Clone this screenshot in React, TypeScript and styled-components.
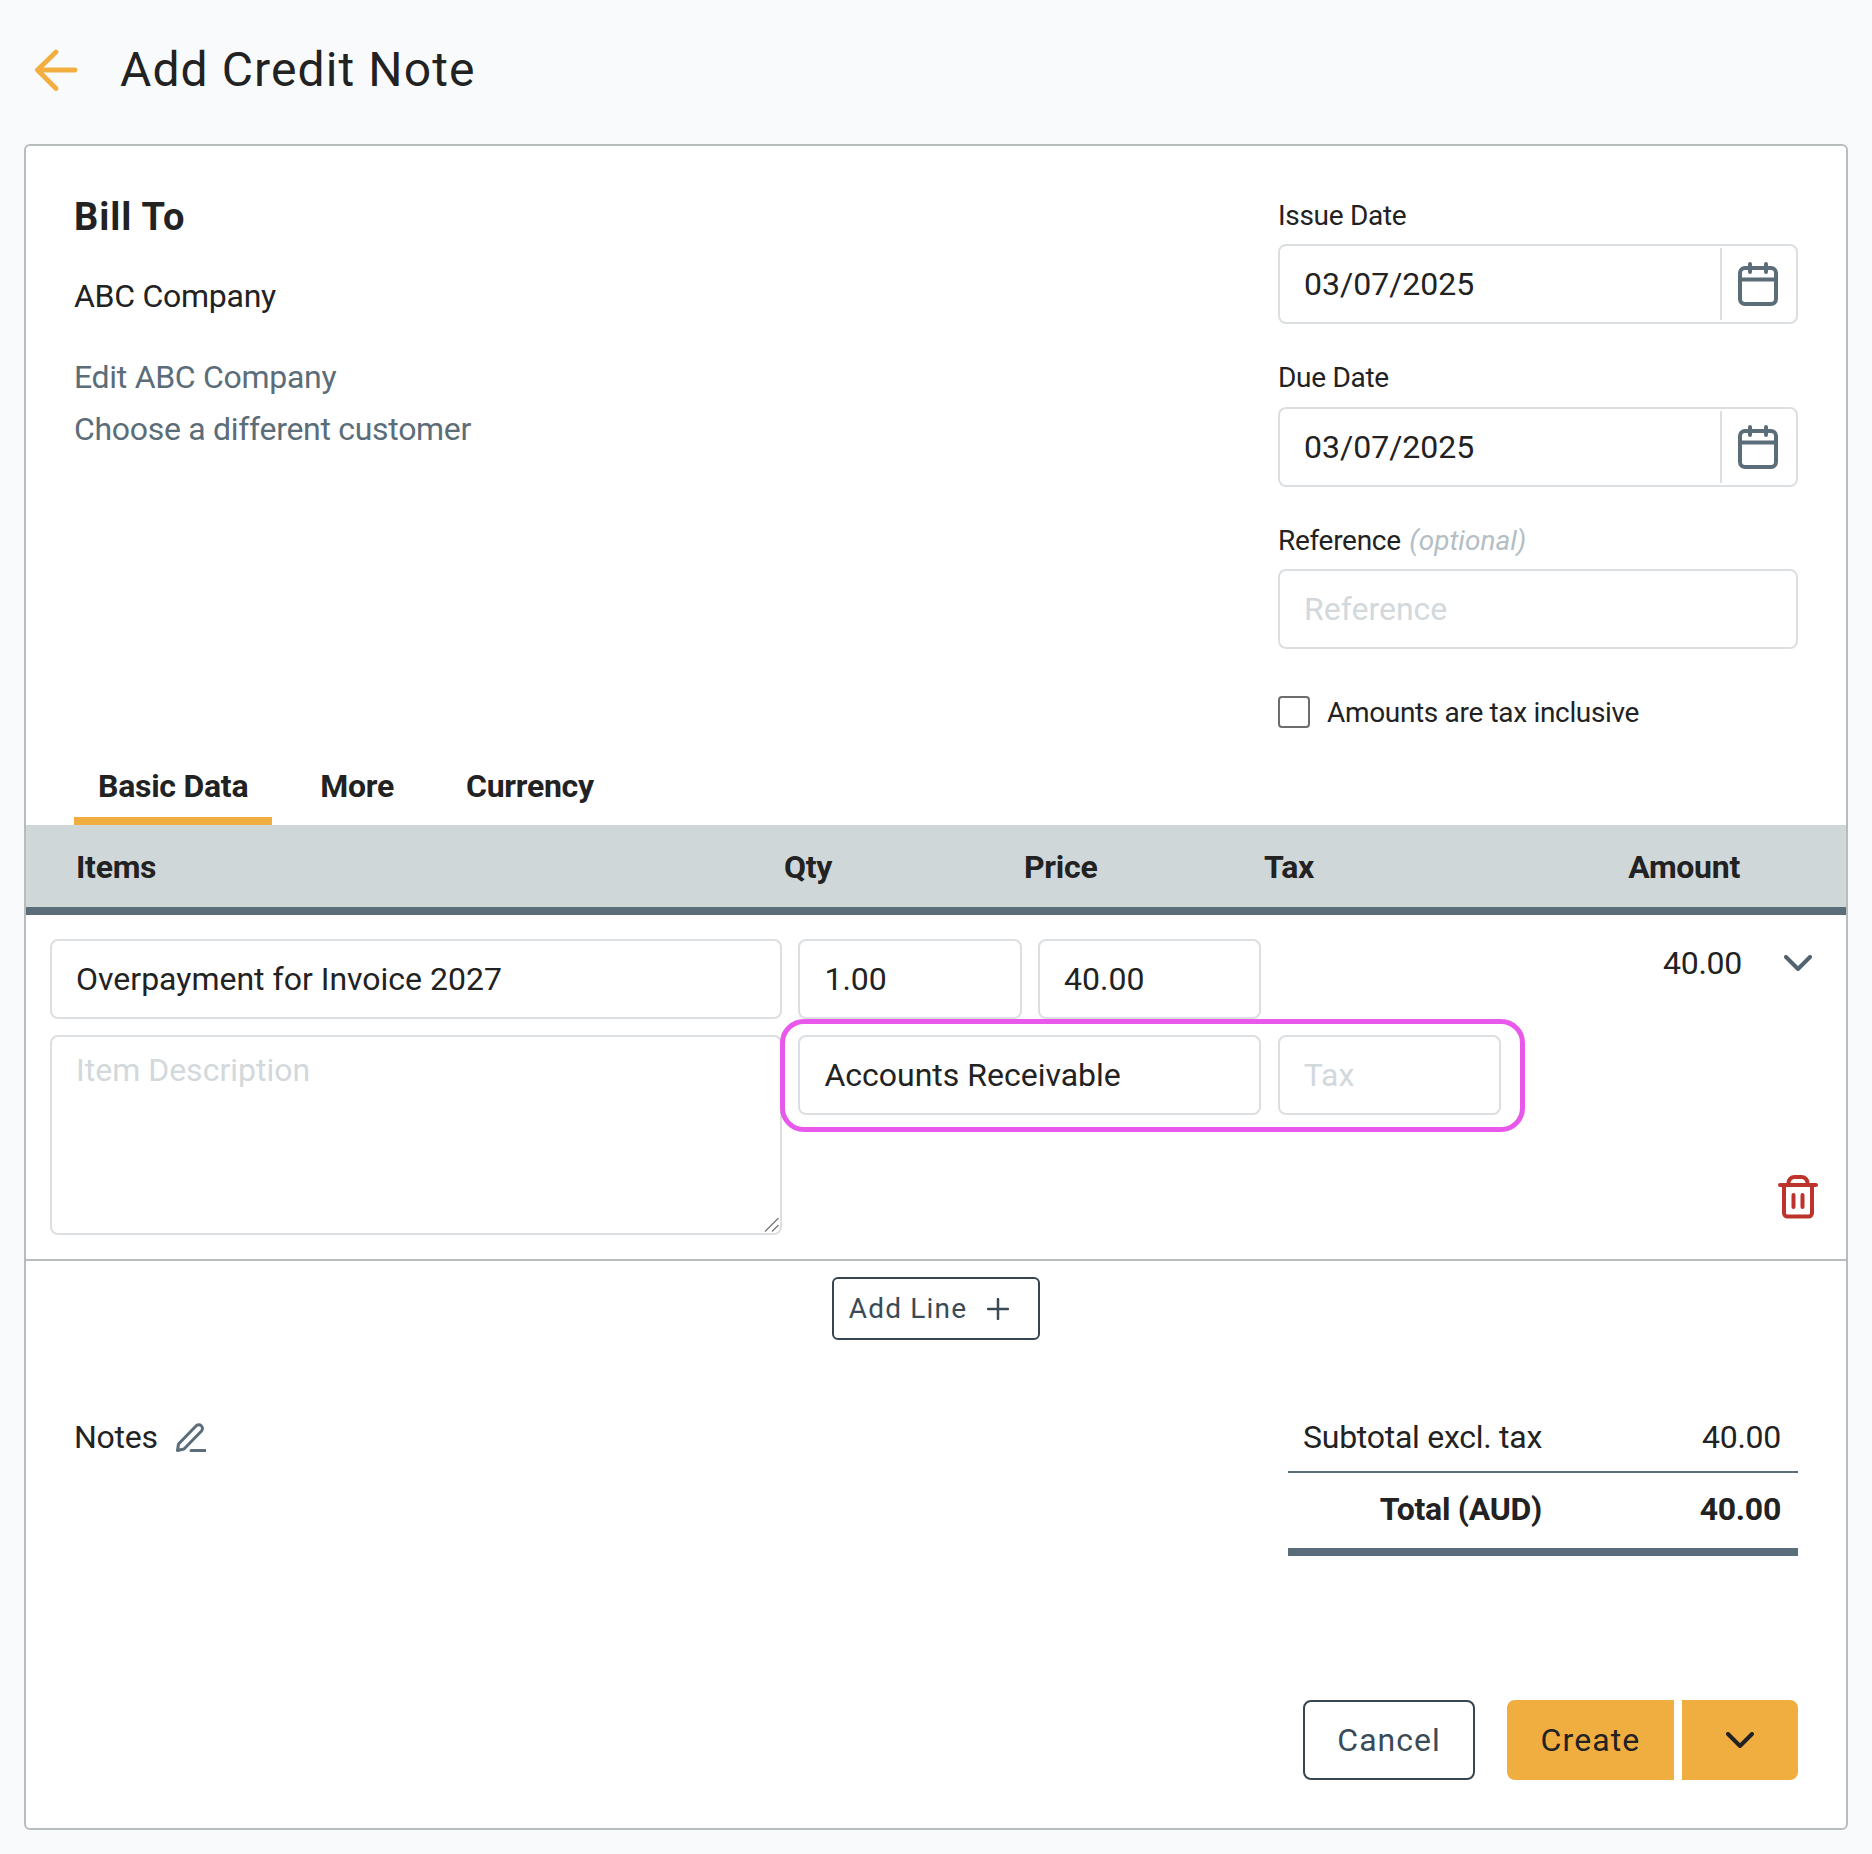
import React from "react";
import styled, { createGlobalStyle } from "styled-components";

const Global = createGlobalStyle`
  html, body { margin: 0; padding: 0; background: #f9fafc; }
  body { font-family: Roboto, "Liberation Sans", sans-serif; color: #222; letter-spacing: -0.27px; }
  * { box-sizing: border-box; }
`;

const Page = styled.div`
  width: 1872px;
  min-height: 1854px;
`;

const Header = styled.header`
  height: 144px;
  padding: 0 0 5px 34px;
  display: flex;
  align-items: center;
  gap: 42px;
`;

const Title = styled.h1`
  margin: 0;
  font-size: 48px;
  font-weight: 400;
  letter-spacing: 1.1px;
  color: #222;
`;

const Card = styled.main`
  margin-left: 24px;
  width: 1824px;
  height: 1686px;
  background: #fff;
  border: 2px solid #b9bcbd;
  border-radius: 6px;
  display: flex;
  flex-direction: column;
`;

const TopSection = styled.section`
  display: grid;
  grid-template-columns: 1fr 520px;
  padding: 50px 48px 29px 48px;
`;

const Customer = styled.div`
  display: flex;
  flex-direction: column;
  align-items: flex-start;
`;

const BillTitle = styled.h2`
  margin: 0 0 32px;
  height: 44px;
  line-height: 42px;
  font-size: 38px;
  font-weight: 700;
  letter-spacing: 0.95px;
`;

const CompanyName = styled.div`
  height: 48px;
  line-height: 48px;
  font-size: 32px;
  margin-bottom: 33px;
`;

const CustomerLink = styled.a`
  height: 52px;
  line-height: 48px;
  font-size: 32px;
  letter-spacing: -0.3px;
  color: #5b6d79;
`;

const Field = styled.div`
  margin-bottom: 34px;
`;

const Label = styled.label<{ $tight?: boolean }>`
  display: block;
  height: 40px;
  line-height: 40px;
  margin-bottom: ${(p) => (p.$tight ? "8px" : "9px")};
  font-size: 28px;
  letter-spacing: -0.3px;
`;

const Optional = styled.em`
  margin-left: 2px;
  letter-spacing: 0;
  color: #b3bec5;
`;

const TextInput = styled.input`
  display: block;
  width: 100%;
  height: 80px;
  padding: 0 24px;
  border: 2px solid #dcdfe1;
  border-radius: 8px;
  background: #fff;
  font-family: inherit;
  font-size: 32px;
  color: #222;
  outline: none;
  &::placeholder { color: #d2d8db; opacity: 1; }
`;

const DateBox = styled.div`
  display: flex;
  height: 80px;
  border: 2px solid #dcdfe1;
  border-radius: 8px;
`;

const DateInput = styled.input`
  flex: 1;
  min-width: 0;
  padding: 0 24px;
  border: 0;
  background: transparent;
  font-family: inherit;
  font-size: 32px;
  color: #222;
  outline: none;
`;

const CalendarButton = styled.div`
  width: 76px;
  margin: 2px 0;
  padding-right: 2px;
  border-left: 2px solid #dcdfe1;
  display: flex;
  align-items: center;
  justify-content: center;
`;

const CheckRow = styled.div`
  display: flex;
  align-items: center;
  gap: 17px;
  margin-top: 47px;
  height: 32px;
  font-size: 28px;
  letter-spacing: -0.33px;
`;

const CheckBox = styled.span`
  width: 32px;
  height: 32px;
  border: 2px solid #6d6d6d;
  border-radius: 4px;
`;

const Tabs = styled.nav`
  display: flex;
  gap: 24px;
  padding-left: 48px;
`;

const Tab = styled.div<{ $active?: boolean }>`
  height: 68px;
  padding: 0 24px;
  line-height: 58px;
  font-size: 32px;
  font-weight: 700;
  border-bottom: 8px solid ${(p) => (p.$active ? "#f0ae40" : "transparent")};
`;

const TableHead = styled.div`
  display: grid;
  grid-template-columns: 708px 240px 240px 1fr auto;
  align-items: center;
  height: 90px;
  padding: 1px 106px 0 50px;
  background: #d0d7d9;
  border-bottom: 8px solid #5b6d79;
  font-size: 32px;
  font-weight: 700;
`;

const Line = styled.div`
  display: grid;
  grid-template-columns: 732px 223.3px 223.3px 223.3px 1fr;
  grid-template-rows: 80px 80px 104px;
  column-gap: 16.4px;
  row-gap: 16px;
  padding: 24px 0 24px 24px;
  border-bottom: 2px solid #b9bcbd;
`;

const DescriptionBox = styled.div`
  grid-column: 1;
  grid-row: 2 / 4;
  position: relative;
`;

const Description = styled.textarea`
  display: block;
  width: 100%;
  height: 200px;
  padding: 12px 24px;
  line-height: 42px;
  border: 2px solid #dcdfe1;
  border-radius: 8px;
  font-family: inherit;
  font-size: 32px;
  outline: none;
  resize: none;
  &::placeholder { color: #d2d8db; opacity: 1; }
`;

const Grip = styled.svg`
  position: absolute;
  right: 3px;
  bottom: 3px;
`;

const Highlight = styled.div`
  grid-column: 2 / 5;
  grid-row: 2;
  position: relative;
  display: grid;
  grid-template-columns: 1fr 223.3px;
  column-gap: 16.4px;
  &::after {
    content: "";
    position: absolute;
    inset: -16px -24px -17px -18px;
    border: 5px solid #e858ea;
    border-radius: 24px;
    pointer-events: none;
  }
`;

const AmountColumn = styled.div`
  grid-column: 5;
  grid-row: 1 / 4;
  display: flex;
  flex-direction: column;
`;

const AmountRow = styled.div`
  display: flex;
  align-items: center;
  justify-content: flex-end;
  gap: 42px;
  height: 48px;
  padding-right: 34px;
  font-size: 32px;
`;

const TrashButton = styled.div`
  margin: auto 28px 16px auto;
  display: flex;
`;

const AddRow = styled.div`
  display: flex;
  justify-content: center;
  padding: 16px 1px 0 0;
`;

const AddButton = styled.div`
  width: 208px;
  height: 63px;
  padding-right: 13px;
  display: flex;
  align-items: center;
  justify-content: center;
  gap: 20px;
  border: 2px solid #36454f;
  border-radius: 6px;
  font-size: 28px;
  letter-spacing: 1.2px;
  color: #3a4b57;
`;

const Bottom = styled.section`
  display: flex;
  justify-content: space-between;
  padding: 61px 48px 0 48px;
`;

const Notes = styled.div`
  display: flex;
  align-items: center;
  gap: 18px;
  height: 72px;
  font-size: 32px;
`;

const Totals = styled.div`
  width: 510px;
`;

const TotalRow = styled.div<{ $grand?: boolean }>`
  display: grid;
  grid-template-columns: 254px 1fr;
  padding-right: 17px;
  height: ${(p) => (p.$grand ? "83px" : "72px")};
  line-height: 72px;
  font-size: 32px;
  font-weight: ${(p) => (p.$grand ? 700 : 400)};
  border-bottom: ${(p) => (p.$grand ? "8px" : "2px")} solid #5b6d79;
`;

const TotalLabel = styled.span`
  text-align: right;
`;

const TotalValue = styled.span`
  text-align: right;
`;

const Actions = styled.div`
  display: flex;
  justify-content: flex-end;
  margin: auto 48px 48px 0;
`;

const CancelButton = styled.div`
  width: 172px;
  height: 80px;
  margin-right: 32px;
  display: flex;
  align-items: center;
  justify-content: center;
  border: 2px solid #36454f;
  border-radius: 8px;
  font-size: 32px;
  letter-spacing: 1px;
  color: #3a4b57;
`;

const CreateButton = styled.div`
  width: 167px;
  height: 80px;
  margin-right: 8px;
  display: flex;
  align-items: center;
  justify-content: center;
  background: #f0ae40;
  border-radius: 8px 0 0 8px;
  font-size: 32px;
  letter-spacing: 1.1px;
`;

const MenuButton = styled.div`
  width: 116px;
  height: 80px;
  display: flex;
  align-items: center;
  justify-content: center;
  background: #f0ae40;
  border-radius: 0 8px 8px 0;
`;

const ArrowIcon = () => (
  <svg width="44" height="42" viewBox="0 0 44 42" fill="none" stroke="#f2af3f" strokeWidth="4.800" strokeLinecap="round" strokeLinejoin="round">
    <path d="M22 3 3.500 21 22 39.500M3.500 21H41" />
  </svg>
);

const CalendarIcon = () => (
  <svg width="40" height="44" viewBox="0 0 40 44" fill="none" stroke="#5b6d79" strokeWidth="4" strokeLinecap="round">
    <rect x="2" y="6" width="36" height="36" rx="5" />
    <path d="M2 17.500h36M12 2v8M28 2v8" />
  </svg>
);

const ChevronIcon = ({ color, w, h }: { color: string; w: number; h: number }) => (
  <svg width={w} height={h} viewBox={`0 0 ${w} ${h}`} fill="none" stroke={color} strokeWidth="4" strokeLinecap="round" strokeLinejoin="round">
    <path d={`M2 2 ${w / 2} ${h - 2} ${w - 2} 2`} />
  </svg>
);

const TrashIcon = () => (
  <svg width="40" height="44" viewBox="0 0 40 44" fill="none" stroke="#be332b" strokeWidth="4" strokeLinecap="round" strokeLinejoin="round">
    <path d="M2 10h36M10.500 9V8a6 6 0 0 1 6-6h7a6 6 0 0 1 6 6v1M6 10v28a3.500 3.500 0 0 0 3.500 3.500h21a3.500 3.500 0 0 0 3.500-3.500V10M15.500 20v12M24.500 20v12" />
  </svg>
);

const PlusIcon = () => (
  <svg width="22" height="22" viewBox="0 0 22 22" fill="none" stroke="#3a4b57" strokeWidth="2.500" strokeLinecap="round">
    <path d="M11 1v20M1 11h20" />
  </svg>
);

const PencilIcon = () => (
  <svg width="30" height="29" viewBox="0 0 30 29" fill="none" stroke="#5b6d79" strokeWidth="3" strokeLinecap="round" strokeLinejoin="round">
    <path d="M1.500 27.500 2.500 21 20 3a3.500 3.500 0 0 1 5.500 5L8 26zM15 27.500H29" />
  </svg>
);

const ResizeGrip = () => (
  <Grip width="15" height="15" viewBox="0 0 15 15" fill="none" stroke="#777" strokeWidth="1.300">
    <path d="M1 14.500 14.500 1M8 14.500 14.500 8" />
  </Grip>
);

export default function App() {
  return (
    <Page>
      <Global />
      <Header>
        <ArrowIcon />
        <Title>Add Credit Note</Title>
      </Header>
      <Card>
        <TopSection>
          <Customer>
            <BillTitle>Bill To</BillTitle>
            <CompanyName>ABC Company</CompanyName>
            <CustomerLink>Edit ABC Company</CustomerLink>
            <CustomerLink>Choose a different customer</CustomerLink>
          </Customer>
          <div>
            <Field>
              <Label $tight>Issue Date</Label>
              <DateBox>
                <DateInput readOnly value="03/07/2025" />
                <CalendarButton><CalendarIcon /></CalendarButton>
              </DateBox>
            </Field>
            <Field>
              <Label>Due Date</Label>
              <DateBox>
                <DateInput readOnly value="03/07/2025" />
                <CalendarButton><CalendarIcon /></CalendarButton>
              </DateBox>
            </Field>
            <Field>
              <Label $tight>Reference <Optional>(optional)</Optional></Label>
              <TextInput placeholder="Reference" />
            </Field>
            <CheckRow>
              <CheckBox />
              Amounts are tax inclusive
            </CheckRow>
          </div>
        </TopSection>
        <Tabs>
          <Tab $active>Basic Data</Tab>
          <Tab>More</Tab>
          <Tab>Currency</Tab>
        </Tabs>
        <TableHead>
          <span>Items</span>
          <span>Qty</span>
          <span>Price</span>
          <span>Tax</span>
          <span>Amount</span>
        </TableHead>
        <Line>
          <TextInput readOnly value="Overpayment for Invoice 2027" />
          <TextInput readOnly value="1.00" />
          <TextInput readOnly value="40.00" />
          <AmountColumn>
            <AmountRow>
              40.00
              <ChevronIcon color="#526471" w={28} h={16} />
            </AmountRow>
            <TrashButton><TrashIcon /></TrashButton>
          </AmountColumn>
          <DescriptionBox>
            <Description placeholder="Item Description" />
            <ResizeGrip />
          </DescriptionBox>
          <Highlight>
            <TextInput readOnly value="Accounts Receivable" />
            <TextInput placeholder="Tax" />
          </Highlight>
        </Line>
        <AddRow>
          <AddButton>Add Line <PlusIcon /></AddButton>
        </AddRow>
        <Bottom>
          <Notes>Notes <PencilIcon /></Notes>
          <Totals>
            <TotalRow><TotalLabel>Subtotal excl. tax</TotalLabel><TotalValue>40.00</TotalValue></TotalRow>
            <TotalRow $grand><TotalLabel>Total (AUD)</TotalLabel><TotalValue>40.00</TotalValue></TotalRow>
          </Totals>
        </Bottom>
        <Actions>
          <CancelButton>Cancel</CancelButton>
          <CreateButton>Create</CreateButton>
          <MenuButton><ChevronIcon color="#222" w={28} h={16} /></MenuButton>
        </Actions>
      </Card>
    </Page>
  );
}
